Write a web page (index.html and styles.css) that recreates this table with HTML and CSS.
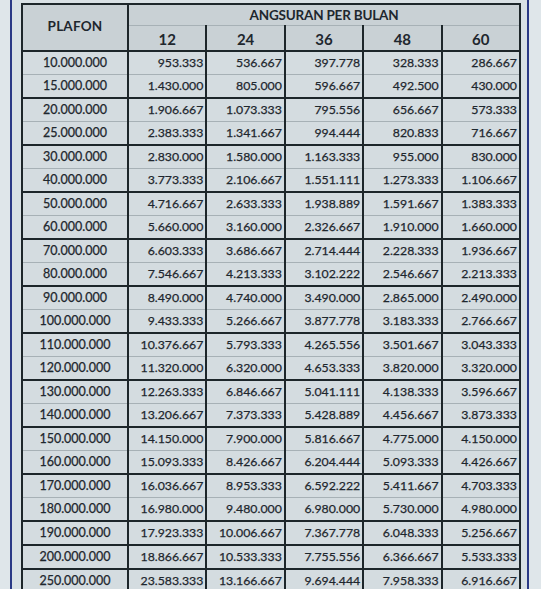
FILE: index.html
```html
<!DOCTYPE html>
<html lang="id">
<head>
<meta charset="utf-8">
<title>Tabel Angsuran</title>
<link rel="stylesheet" href="styles.css">
</head>
<body>
<div class="page">
  <div class="frame">
    <table class="tbl">
      <colgroup>
        <col class="c-plafon"><col class="c-num"><col class="c-num"><col class="c-num"><col class="c-num"><col class="c-num">
      </colgroup>
      <thead>
        <tr class="h1">
          <th rowspan="2" class="plafon">PLAFON</th>
          <th colspan="5" class="angs">ANGSURAN PER BULAN</th>
        </tr>
        <tr class="h2">
          <th>12</th><th>24</th><th>36</th><th>48</th><th>60</th>
        </tr>
      </thead>
      <tbody>
        <tr class="a"><td>10.000.000</td><td>953.333</td><td>536.667</td><td>397.778</td><td>328.333</td><td>286.667</td></tr>
        <tr class="b"><td>15.000.000</td><td>1.430.000</td><td>805.000</td><td>596.667</td><td>492.500</td><td>430.000</td></tr>
        <tr class="a"><td>20.000.000</td><td>1.906.667</td><td>1.073.333</td><td>795.556</td><td>656.667</td><td>573.333</td></tr>
        <tr class="b"><td>25.000.000</td><td>2.383.333</td><td>1.341.667</td><td>994.444</td><td>820.833</td><td>716.667</td></tr>
        <tr class="a"><td>30.000.000</td><td>2.830.000</td><td>1.580.000</td><td>1.163.333</td><td>955.000</td><td>830.000</td></tr>
        <tr class="b"><td>40.000.000</td><td>3.773.333</td><td>2.106.667</td><td>1.551.111</td><td>1.273.333</td><td>1.106.667</td></tr>
        <tr class="a"><td>50.000.000</td><td>4.716.667</td><td>2.633.333</td><td>1.938.889</td><td>1.591.667</td><td>1.383.333</td></tr>
        <tr class="b"><td>60.000.000</td><td>5.660.000</td><td>3.160.000</td><td>2.326.667</td><td>1.910.000</td><td>1.660.000</td></tr>
        <tr class="a"><td>70.000.000</td><td>6.603.333</td><td>3.686.667</td><td>2.714.444</td><td>2.228.333</td><td>1.936.667</td></tr>
        <tr class="b"><td>80.000.000</td><td>7.546.667</td><td>4.213.333</td><td>3.102.222</td><td>2.546.667</td><td>2.213.333</td></tr>
        <tr class="a"><td>90.000.000</td><td>8.490.000</td><td>4.740.000</td><td>3.490.000</td><td>2.865.000</td><td>2.490.000</td></tr>
        <tr class="b"><td>100.000.000</td><td>9.433.333</td><td>5.266.667</td><td>3.877.778</td><td>3.183.333</td><td>2.766.667</td></tr>
        <tr class="a"><td>110.000.000</td><td>10.376.667</td><td>5.793.333</td><td>4.265.556</td><td>3.501.667</td><td>3.043.333</td></tr>
        <tr class="b"><td>120.000.000</td><td>11.320.000</td><td>6.320.000</td><td>4.653.333</td><td>3.820.000</td><td>3.320.000</td></tr>
        <tr class="a"><td>130.000.000</td><td>12.263.333</td><td>6.846.667</td><td>5.041.111</td><td>4.138.333</td><td>3.596.667</td></tr>
        <tr class="b"><td>140.000.000</td><td>13.206.667</td><td>7.373.333</td><td>5.428.889</td><td>4.456.667</td><td>3.873.333</td></tr>
        <tr class="a"><td>150.000.000</td><td>14.150.000</td><td>7.900.000</td><td>5.816.667</td><td>4.775.000</td><td>4.150.000</td></tr>
        <tr class="b"><td>160.000.000</td><td>15.093.333</td><td>8.426.667</td><td>6.204.444</td><td>5.093.333</td><td>4.426.667</td></tr>
        <tr class="a"><td>170.000.000</td><td>16.036.667</td><td>8.953.333</td><td>6.592.222</td><td>5.411.667</td><td>4.703.333</td></tr>
        <tr class="b"><td>180.000.000</td><td>16.980.000</td><td>9.480.000</td><td>6.980.000</td><td>5.730.000</td><td>4.980.000</td></tr>
        <tr class="b"><td>190.000.000</td><td>17.923.333</td><td>10.006.667</td><td>7.367.778</td><td>6.048.333</td><td>5.256.667</td></tr>
        <tr class="b"><td>200.000.000</td><td>18.866.667</td><td>10.533.333</td><td>7.755.556</td><td>6.366.667</td><td>5.533.333</td></tr>
        <tr class="b"><td>250.000.000</td><td>23.583.333</td><td>13.166.667</td><td>9.694.444</td><td>7.958.333</td><td>6.916.667</td></tr>
      </tbody>
    </table>
  </div>
</div>
</body>
</html>
```

FILE: styles.css
```css
html, body {
  margin: 0;
  padding: 0;
  background: #dfe6ea;
}
body {
  width: 541px;
  height: 589px;
  overflow: hidden;
  font-family: Lato, "Open Sans", sans-serif;
  color: #1e272e;
}
.page {
  padding-left: 10px;
  display: flex;
}
.frame {
  border-left: 2px solid #2b3a86;
  border-right: 2px solid #2b3a86;
  background: #d9e1e5;
  padding: 3px 6px 0 9px;
  height: 600px;
}
.tbl {
  border-collapse: collapse;
  width: 498px;
  table-layout: fixed;
  background: #d4dce0;
}
.c-plafon { width: 106px; }
.c-num { width: 78.4px; }
.tbl th {
  background: #c9d1d5;
  border: 2px solid #1d262a;
  font-weight: 700;
  padding: 0;
  line-height: 1;
}
.tbl .plafon {
  font-size: 13.5px;
  letter-spacing: 0.2px;
  vertical-align: middle;
  padding-bottom: 2px;
}
.tbl .angs {
  font-size: 13.5px;
  height: 19px;
  border-bottom: 1px solid #a7b1b6;
  letter-spacing: -0.2px;
  padding-top: 1px;
}
.tbl .h2 th {
  height: 21px;
  font-size: 15px;
  border-top: 1px solid #a7b1b6;
  padding-top: 3px;
}
.tbl td {
  height: 22px;
  padding: 0 2px 0 0;
  font-size: 12.3px;
  line-height: 1;
  text-align: right;
  border-left: 2px solid #1d262a;
  border-right: 2px solid #1d262a;
  white-space: nowrap;
  -webkit-text-stroke: 0.25px #1e272e;
}
.tbl td:first-child {
  text-align: center;
  padding-right: 0;
  font-size: 12.5px;
}
.tbl tr.a td {
  border-bottom: 1px solid #a7b1b6;
}
.tbl tr.b td {
  border-bottom: 2px solid #1d262a;
}
```
